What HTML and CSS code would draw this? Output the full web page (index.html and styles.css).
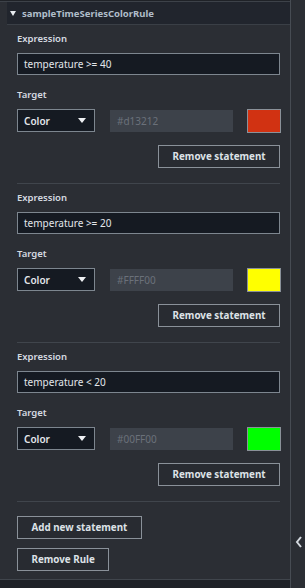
FILE: index.html
```html
<!DOCTYPE html>
<html lang="en">
<head>
    <meta charset="UTF-8">
    <meta name="viewport" content="width=device-width, initial-scale=1.0">
    <title>Color Rule</title>
    <link rel="stylesheet" href="styles.css">
</head>
<body>
    <div class="app">
        <div class="panel">
            <div class="rule">
                <div class="rule-header">
                    <span class="caret"></span>
                    <span class="rule-title">sampleTimeSeriesColorRule</span>
                </div>
                <div class="rule-body">
                    <!-- Statement 1 -->
                    <div class="statement">
                        <div class="field">
                            <div class="field-label">Expression</div>
                            <div class="text-input">temperature &gt;= 40</div>
                        </div>
                        <div class="field target">
                            <div class="field-label">Target</div>
                            <div class="target-row">
                                <div class="select">Color<span class="select-arrow"></span></div>
                                <div class="hex-input">#d13212</div>
                                <div class="swatch" style="background-color: #d13212"></div>
                            </div>
                        </div>
                        <div class="statement-actions">
                            <button class="btn">Remove statement</button>
                        </div>
                    </div>

                    <!-- Statement 2 -->
                    <div class="statement">
                        <div class="field">
                            <div class="field-label">Expression</div>
                            <div class="text-input">temperature &gt;= 20</div>
                        </div>
                        <div class="field target">
                            <div class="field-label">Target</div>
                            <div class="target-row">
                                <div class="select">Color<span class="select-arrow"></span></div>
                                <div class="hex-input">#FFFF00</div>
                                <div class="swatch" style="background-color: #ffff00"></div>
                            </div>
                        </div>
                        <div class="statement-actions">
                            <button class="btn">Remove statement</button>
                        </div>
                    </div>

                    <!-- Statement 3 -->
                    <div class="statement">
                        <div class="field">
                            <div class="field-label">Expression</div>
                            <div class="text-input">temperature &lt; 20</div>
                        </div>
                        <div class="field target">
                            <div class="field-label">Target</div>
                            <div class="target-row">
                                <div class="select">Color<span class="select-arrow"></span></div>
                                <div class="hex-input">#00FF00</div>
                                <div class="swatch" style="background-color: #00ff00"></div>
                            </div>
                        </div>
                        <div class="statement-actions">
                            <button class="btn">Remove statement</button>
                        </div>
                    </div>

                    <div class="rule-actions">
                        <button class="btn">Add new statement</button>
                        <button class="btn">Remove Rule</button>
                    </div>
                </div>
            </div>
        </div>
        <div class="side">
            <svg class="chevron" width="8" height="12" viewBox="0 0 8 12">
                <path d="M6 1 L2 6 L6 11" fill="none" stroke="#d3d8de" stroke-width="2"/>
            </svg>
        </div>
    </div>
</body>
</html>
```

FILE: styles.css
```css
body {
    margin: 0;
    background-color: #1f2227;
    font-family: "Noto Sans", "Open Sans", sans-serif;
    font-size: 10px;
    color: #d8dde3;
}
.app {
    display: flex;
    height: 588px;
}
.panel {
    width: 290px;
    padding-top: 1px;
    border-right: 1px solid #474c53;
    background-color: #1f2227;
}
.rule {
    background-color: #2b2e34;
    border-top: 1px solid #3d4249;
    border-bottom: 1px solid #40454c;
}
.rule-header {
    display: flex;
    align-items: center;
    height: 22px;
    margin-left: 7px;
    padding-left: 3px;
    background-color: #21252d;
    border-bottom: 1px solid #3a3f46;
}
.caret {
    width: 0;
    height: 0;
    border-left: 3.5px solid transparent;
    border-right: 3.5px solid transparent;
    border-top: 5px solid #e8ebef;
    margin-right: 6px;
}
.rule-title {
    font-weight: 700;
    font-size: 9.5px;
    color: #b0bdca;
}
.rule-body {
    padding: 0 10px 8px 17px;
}
.statement {
    padding: 8px 0 15px;
    border-bottom: 1px solid #40454c;
}
.field-label {
    font-size: 9.5px;
    font-weight: 600;
    line-height: 12px;
    margin-bottom: 8px;
    color: #d5dae0;
}
.target {
    margin-top: 14px;
}
.text-input {
    height: 20px;
    line-height: 20px;
    padding: 0 6px;
    background-color: #151a22;
    border: 1px solid #7d868f;
    color: #e3e7eb;
}
.target-row {
    display: flex;
    align-items: center;
    height: 23px;
    margin-right: -2px;
}
.select {
    display: flex;
    align-items: center;
    justify-content: space-between;
    box-sizing: border-box;
    width: 78px;
    height: 23px;
    padding: 0 8px 0 6px;
    background-color: #151a22;
    border: 1px solid #7d868f;
    font-weight: 600;
    color: #e3e7eb;
}
.select-arrow {
    width: 0;
    height: 0;
    border-left: 4px solid transparent;
    border-right: 4px solid transparent;
    border-top: 5px solid #eef0f3;
}
.hex-input {
    box-sizing: border-box;
    width: 123px;
    height: 22px;
    line-height: 22px;
    margin-left: 15px;
    padding-left: 7px;
    background-color: #3d424a;
    color: #6b717a;
}
.swatch {
    box-sizing: border-box;
    width: 34px;
    height: 24px;
    margin-left: 14px;
    border: 1px solid #8a9199;
}
.statement-actions {
    display: flex;
    justify-content: flex-end;
    margin-top: 13px;
}
.btn {
    box-sizing: border-box;
    height: 23px;
    padding: 0 13.5px;
    background-color: #282b31;
    border: 1px solid #8a9199;
    border-radius: 0;
    font-family: inherit;
    font-size: 9.8px;
    font-weight: 700;
    color: #dde2e7;
}
.rule-actions {
    display: flex;
    flex-direction: column;
    align-items: flex-start;
    gap: 9px;
    margin-top: 14px;
}
.side {
    flex: 1;
    background-color: #2b2e34;
}
.chevron {
    display: block;
    margin: 536px 0 0 4px;
}
```
